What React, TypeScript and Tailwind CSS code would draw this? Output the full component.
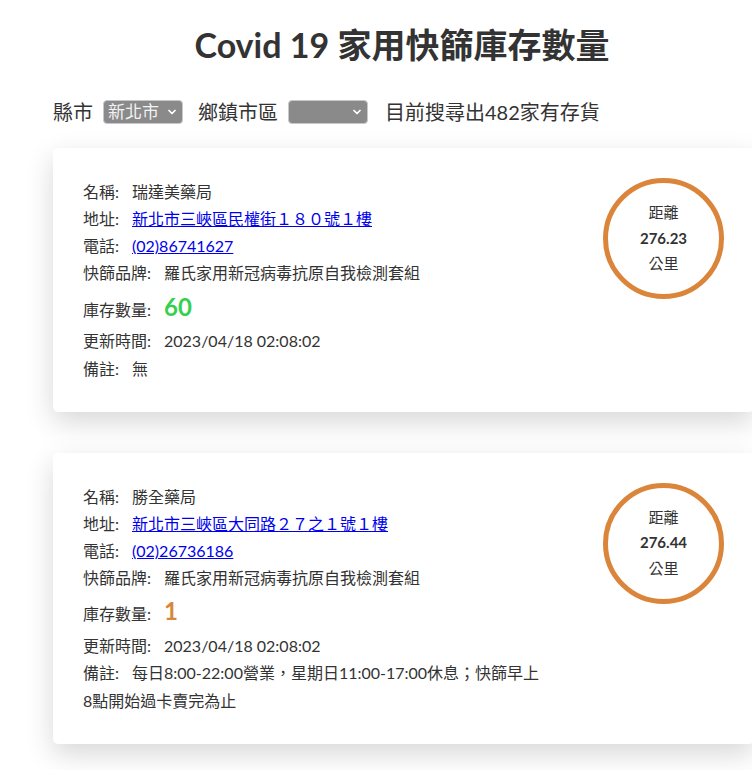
import { ChevronDown } from "lucide-react";

interface Store {
  name: string;
  address: string;
  phone: string;
  brand: string;
  count: number;
  updatedAt: string;
  note: string;
  distance: string;
}

const stores: Store[] = [
  {
    name: "瑞達美藥局",
    address: "新北市三峽區民權街１８０號１樓",
    phone: "(02)86741627",
    brand: "羅氏家用新冠病毒抗原自我檢測套組",
    count: 60,
    updatedAt: "2023/04/18 02:08:02",
    note: "無",
    distance: "276.23",
  },
  {
    name: "勝全藥局",
    address: "新北市三峽區大同路２７之１號１樓",
    phone: "(02)26736186",
    brand: "羅氏家用新冠病毒抗原自我檢測套組",
    count: 1,
    updatedAt: "2023/04/18 02:08:02",
    note: "每日8:00-22:00營業，星期日11:00-17:00休息；快篩早上8點開始過卡賣完為止",
    distance: "276.44",
  },
];

function Select({ value }: { value?: string }) {
  return (
    <div className="flex h-[24px] w-[80px] items-center justify-between rounded-[4px] border border-[#c8c8c8] bg-[#8a8a8a] pl-[4px] pr-[4px] text-[17px] leading-none text-[#f2f2f2]">
      <span>{value ?? ""}</span>
      <ChevronDown className="h-[12px] w-[12px] text-white" strokeWidth={3.5} />
    </div>
  );
}

function Row({ label, children }: { label: string; children: React.ReactNode }) {
  return (
    <p>
      <span>{label}:</span>
      <span className="ml-[13px]">{children}</span>
    </p>
  );
}

function StoreCard({ store }: { store: Store }) {
  const countColor = store.count > 10 ? "text-[#35d14c]" : "text-[#d9873b]";

  return (
    <div className="flex w-[701px] items-start justify-between rounded-[5px] bg-white p-[30px] shadow-[0_10px_28px_rgba(0,0,0,0.16)]">
      <div className="w-[458px] text-[16px] leading-[1.7] text-[#333]">
        <Row label="名稱">{store.name}</Row>
        <Row label="地址">
          <a href="#" className="text-[#0000ee] underline">
            {store.address}
          </a>
        </Row>
        <Row label="電話">
          <a href="#" className="text-[#0000ee] underline">
            {store.phone}
          </a>
        </Row>
        <Row label="快篩品牌">{store.brand}</Row>
        <p>
          <span>庫存數量:</span>
          <span className={`ml-[13px] text-[24px] font-bold leading-[1.7] ${countColor}`}>{store.count}</span>
        </p>
        <Row label="更新時間">{store.updatedAt}</Row>
        <Row label="備註">{store.note}</Row>
      </div>

      <div className="flex h-[121px] w-[121px] shrink-0 flex-col items-center justify-center rounded-full border-[5px] border-[#db853a] text-[15px] leading-[1.7] text-[#333]">
        <span>距離</span>
        <span className="font-bold">{store.distance}</span>
        <span>公里</span>
      </div>
    </div>
  );
}

export default function App() {
  return (
    <div
      className="min-h-screen w-full overflow-hidden bg-white pb-[40px] pl-[53px] text-[#333]"
      style={{ fontFamily: 'Lato, "Noto Sans CJK TC", sans-serif' }}
    >
      <h1 className="w-[698px] pt-[25px] text-center text-[34px] font-bold leading-[1.2]">
        Covid 19 家用快篩庫存數量
      </h1>

      <div className="mt-[31px] flex items-center text-[20px] leading-[1.5]">
        <span>縣市</span>
        <div className="ml-[10px]">
          <Select value="新北市" />
        </div>
        <span className="ml-[15px]">鄉鎮市區</span>
        <div className="ml-[10px]">
          <Select />
        </div>
        <span className="ml-[17px]">目前搜尋出482家有存貨</span>
      </div>

      <div className="mt-[21px] flex flex-col gap-[41px]">
        {stores.map((store) => (
          <StoreCard key={store.name} store={store} />
        ))}
      </div>
    </div>
  );
}
